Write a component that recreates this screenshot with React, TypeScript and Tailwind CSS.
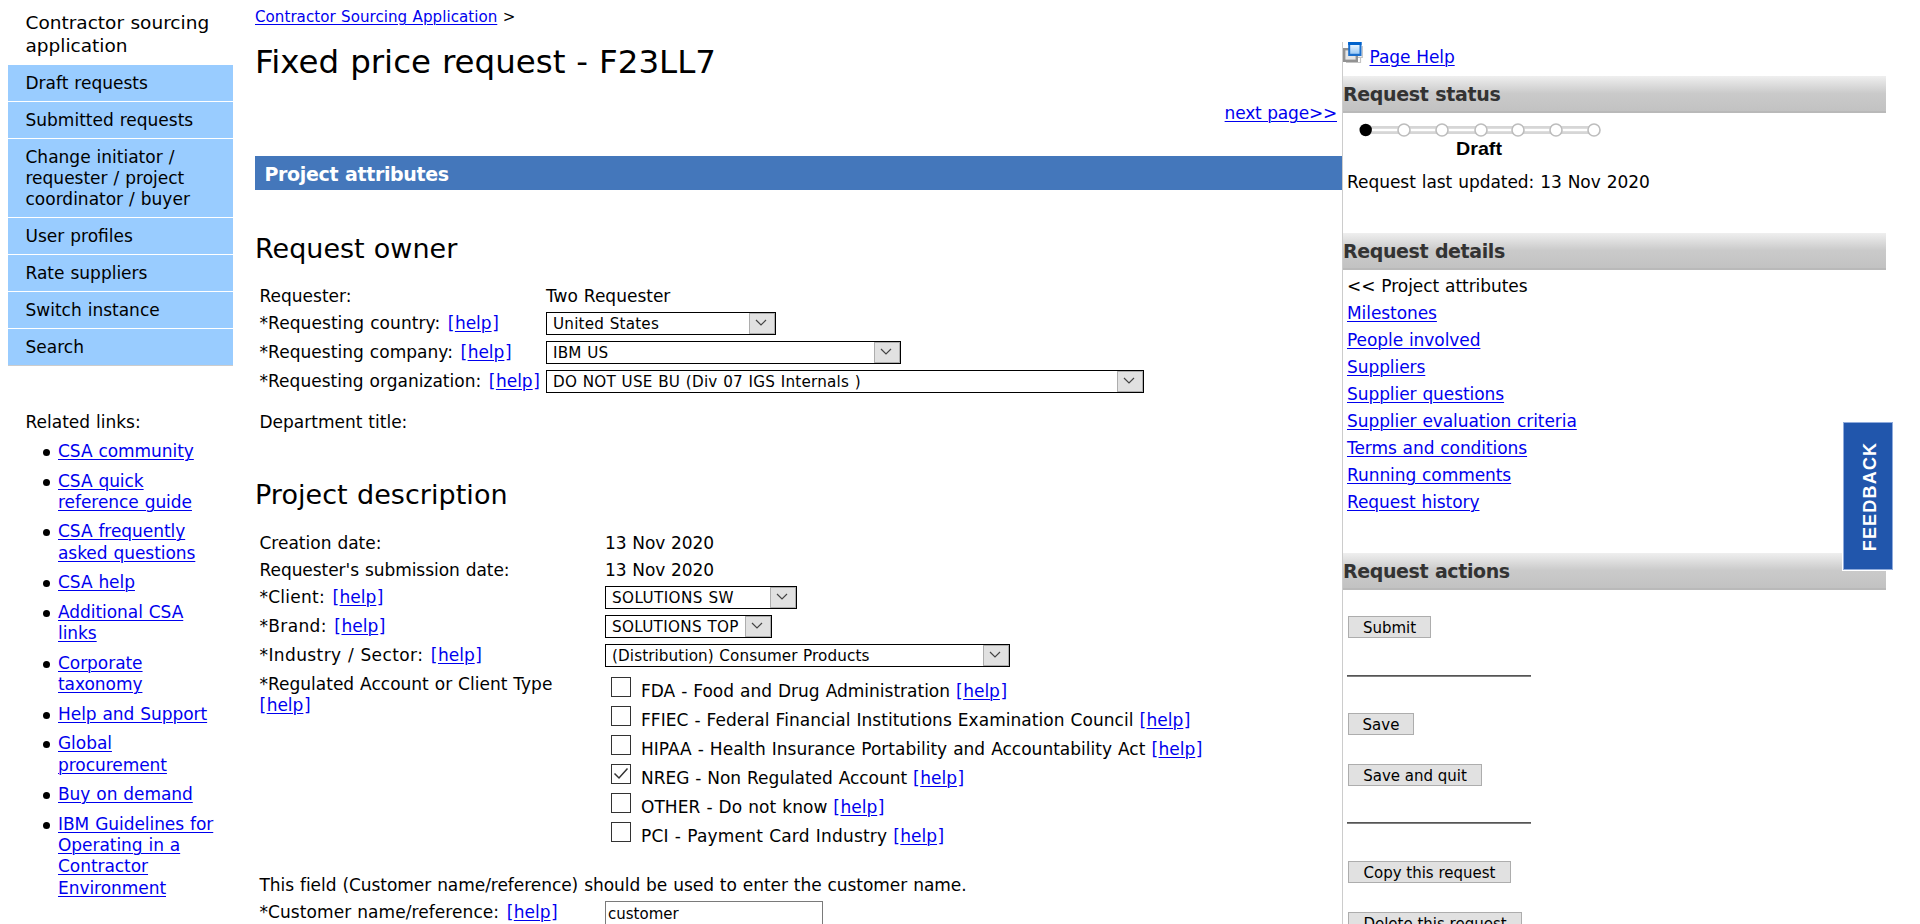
import type { ReactNode } from "react";

const navItems = [
  "Draft requests",
  "Submitted requests",
  "Change initiator / requester / project coordinator / buyer",
  "User profiles",
  "Rate suppliers",
  "Switch instance",
  "Search",
];

const relatedLinks = [
  "CSA community",
  "CSA quick reference guide",
  "CSA frequently asked questions",
  "CSA help",
  "Additional CSA links",
  "Corporate taxonomy",
  "Help and Support",
  "Global procurement",
  "Buy on demand",
  "IBM Guidelines for Operating in a Contractor Environment",
];

const accountTypes = [
  { label: "FDA - Food and Drug Administration", checked: false, spacing: "" },
  { label: "FFIEC - Federal Financial Institutions Examination Council", checked: false, spacing: "tracking-[0.04px]" },
  { label: "HIPAA - Health Insurance Portability and Accountability Act", checked: false, spacing: "tracking-[0.01px]" },
  { label: "NREG - Non Regulated Account", checked: true, spacing: "tracking-[-0.04px]" },
  { label: "OTHER - Do not know", checked: false, spacing: "tracking-[0.05px]" },
  { label: "PCI - Payment Card Industry", checked: false, spacing: "tracking-[0.18px]" },
];

const detailLinks = [
  "Milestones",
  "People involved",
  "Suppliers",
  "Supplier questions",
  "Supplier evaluation criteria",
  "Terms and conditions",
  "Running comments",
  "Request history",
];

function Link({ children }: { children: ReactNode }) {
  return (
    <a href="#" className="text-[#0000ee] underline decoration-1 underline-offset-2">
      {children}
    </a>
  );
}

function Help() {
  return (
    <a href="#" className="text-[#0000ee]">
      [<span className="mx-[0.5px] underline decoration-1 underline-offset-2">help</span>]
    </a>
  );
}

function FieldLabel({ children, spacing = "tracking-[0.07px]" }: { children: ReactNode; spacing?: string }) {
  return (
    <span className="h-[29px] pt-px whitespace-nowrap">
      <span className={`mr-[1.5px] ${spacing}`}>*{children}:</span> <Help />
    </span>
  );
}

function Select({ value, width, spacing = "tracking-[0.1px]" }: { value: string; width: string; spacing?: string }) {
  return (
    <div className={`flex h-[23px] border border-black bg-white ${width}`}>
      <span className={`flex-1 overflow-hidden pt-px pl-1.5 text-[15.2px] leading-[21px] whitespace-nowrap ${spacing}`}>{value}</span>
      <span className="flex w-[26px] shrink-0 items-center justify-center border border-[#adadad] bg-[#e1e1e1] pr-0.5 pb-px">
        <svg width="12" height="8" viewBox="0 0 12 8" fill="none" stroke="#444" strokeWidth="1.2">
          <path d="M1 1l5 5 5-5" />
        </svg>
      </span>
    </div>
  );
}

function Checkbox({ checked }: { checked: boolean }) {
  return (
    <span className="flex size-5 shrink-0 items-center justify-center border border-[#333] bg-white">
      {checked && (
        <svg width="16" height="14" viewBox="0 0 16 14" fill="none" stroke="#333" strokeWidth="1.5">
          <path d="M1.5 6.5l4.5 4.5L14.5 1.5" />
        </svg>
      )}
    </span>
  );
}

function PanelHeader({ children, spacing = "tracking-[-0.35px]" }: { children: ReactNode; spacing?: string }) {
  return (
    <h3 className={`h-[37px] border-b-2 border-[#b9b9b9] bg-linear-to-b from-[#efefef] via-[#cacaca] to-[#c2c2c2] text-[19px] leading-[36px] font-bold text-[#333] ${spacing}`}>
      {children}
    </h3>
  );
}

function ActionButton({ children, width }: { children: ReactNode; width: string }) {
  return (
    <button className={`ml-[5px] block h-[22px] border border-[#adadad] bg-[#e1e1e1] pt-px text-center text-[15px] leading-[20px] [word-spacing:0] whitespace-nowrap ${width}`}>
      {children}
    </button>
  );
}

function Rule() {
  return <div className="ml-1 h-[2px] w-[184px] border-t border-[#555] bg-[#808080]" />;
}

function StatusTrack() {
  return (
    <svg width="280" height="46" viewBox="0 0 280 46" className="block">
      <rect x="23" y="13" width="228" height="8" fill="#d6d6d6" />
      <rect x="23" y="15.8" width="228" height="2.4" fill="#fff" />
      {[61, 99, 138, 175, 213, 251].map((x) => (
        <circle key={x} cx={x} cy="17" r="6" fill="#fff" stroke="#bdbdbd" strokeWidth="1.6" />
      ))}
      <circle cx="22.7" cy="17" r="6.2" fill="#000" />
      <text x="113" y="42" fontFamily="Liberation Sans, sans-serif" fontWeight="700" fontSize="19" textLength="46" lengthAdjust="spacingAndGlyphs">
        Draft
      </text>
    </svg>
  );
}

function PageHelpIcon() {
  return (
    <svg width="20" height="21" viewBox="0 0 20 21" className="shrink-0">
      <defs>
        <linearGradient id="pane" x1="0" y1="0" x2="0" y2="1">
          <stop offset="0" stopColor="#e6f3ff" />
          <stop offset="1" stopColor="#9ccaf5" />
        </linearGradient>
      </defs>
      <path d="M3 20.5h14.5V15M19.3 4v11.3H8" fill="none" stroke="#c4c4c4" strokeWidth="1.2" />
      <rect x="1.2" y="7.2" width="12.6" height="11.6" fill="#e6e6e6" stroke="#929292" strokeWidth="2.4" />
      <rect x="5.2" y="0" width="13.3" height="14" fill="#1b6fcd" />
      <rect x="5.2" y="0" width="13.3" height="3" fill="#0062cc" />
      <rect x="7.2" y="3" width="9.3" height="8.8" fill="url(#pane)" />
    </svg>
  );
}

export default function App() {
  return (
    <div className="relative flex h-[924px] w-[1920px] items-start overflow-hidden bg-white font-['DejaVu_Sans',sans-serif] text-[17px] leading-[21px] text-black [word-spacing:0.034em]">
      <aside className="ml-2 w-[225px] shrink-0 pt-[11px]">
        <p className="pl-[17.5px] text-[18.5px] leading-[23px]">Contractor sourcing application</p>
        <ul className="mt-2 flex flex-col gap-px border-b border-[#ccc]">
          {navItems.map((item) => (
            <li key={item} className="bg-[#99ccff] pt-2 pr-6 pb-[7px] pl-[17.5px]">
              {item}
            </li>
          ))}
        </ul>
        <p className="mt-[46px] pl-[17.5px]">Related links:</p>
        <ul className="mt-2 flex flex-col gap-[8.3px] leading-[21.3px] tracking-[-0.05px]">
          {relatedLinks.map((item) => (
            <li key={item} className="flex items-start pl-[35px]">
              <span className="mt-[8px] mr-[8px] size-[7px] shrink-0 rounded-full bg-black" />
              <span className="w-[165px]">
                <Link>{item}</Link>
              </span>
            </li>
          ))}
        </ul>
      </aside>

      <main className="ml-[22px] w-[1087px] shrink-0 pt-[7px]">
        <p className="text-[15.1px] leading-[20px] tracking-[0.03px]">
          <Link>Contractor Sourcing Application</Link> &gt;
        </p>
        <h1 className="mt-[15px] text-[32.5px] leading-[40px]">Fixed price request - F23LL7</h1>
        <p className="mt-[21px] pr-[5px] text-right tracking-[-0.2px]">
          <Link>next page&gt;&gt;</Link>
        </p>
        <h2 className="mt-[32px] h-[34px] bg-[#4477bb] pt-px pl-[9.5px] text-[19px] leading-[34px] font-bold tracking-[-0.35px] text-white">Project attributes</h2>

        <h2 className="mt-[42px] text-[27px] leading-[34px]">Request owner</h2>
        <div className="mt-[20px] grid grid-cols-[286.5px_1fr] pl-[4.5px]">
          <span className="h-[26px]">Requester:</span>
          <span>Two Requester</span>
          <FieldLabel>Requesting country</FieldLabel>
          <Select value="United States" width="w-[230px]" spacing="tracking-[0.2px]" />
          <FieldLabel spacing="tracking-[0.04px]">Requesting company</FieldLabel>
          <Select value="IBM US" width="w-[355px]" spacing="tracking-[0.2px]" />
          <FieldLabel spacing="tracking-[0.02px]">Requesting organization</FieldLabel>
          <Select value="DO NOT USE BU (Div 07 IGS Internals )" width="w-[598px]" spacing="tracking-[0.22px]" />
          <span className="mt-[13px]">Department title:</span>
        </div>

        <h2 className="mt-[45px] text-[27px] leading-[34px] tracking-[0.05px]">Project description</h2>
        <div className="mt-[21px] grid grid-cols-[345.5px_1fr] pl-[4.5px]">
          <span className="h-[27px]">Creation date:</span>
          <span className="tracking-[-0.1px]">13 Nov 2020</span>
          <span className="h-[26px] tracking-[-0.05px]">Requester's submission date:</span>
          <span className="tracking-[-0.1px]">13 Nov 2020</span>
          <FieldLabel spacing="tracking-[0.25px]">Client</FieldLabel>
          <Select value="SOLUTIONS SW" width="w-[192px]" spacing="tracking-[0.4px]" />
          <FieldLabel spacing="tracking-[0.35px]">Brand</FieldLabel>
          <Select value="SOLUTIONS TOP" width="w-[167px]" spacing="tracking-[0.3px]" />
          <FieldLabel spacing="tracking-[0.4px]">Industry / Sector</FieldLabel>
          <Select value="(Distribution) Consumer Products" width="w-[405px]" />
          <span className="pt-px">*Regulated Account or Client Type<br /><Help /></span>
          <div className="flex flex-col gap-[2px] pt-1 pl-1.5">
            {accountTypes.map(({ label, checked, spacing }) => (
              <div key={label} className="flex h-[27px] items-start">
                <Checkbox checked={checked} />
                <span className="pt-1 pl-[10px]"><span className={spacing}>{label}</span> <Help /></span>
              </div>
            ))}
          </div>
        </div>
        <p className="mt-[26px] pl-[4.5px] tracking-[-0.045px]">This field (Customer name/reference) should be used to enter the customer name.</p>
        <div className="mt-[5px] grid grid-cols-[345.5px_1fr] pl-[4.5px]">
          <FieldLabel>Customer name/reference</FieldLabel>
          <span className="h-[24px] w-[218px] border border-[#7a7a7a] pt-[2px] pl-0.5 text-[15px]">customer</span>
        </div>
      </main>

      <section className="mt-[42px] h-[882px] w-[544px] shrink-0 border-l border-[#ccc]">
        <div className="flex h-[34px] items-start">
          <PageHelpIcon />
          <span className="pt-[5px] pl-[6.5px] tracking-[-0.08px]"><Link>Page Help</Link></span>
        </div>
        <PanelHeader>Request status</PanelHeader>
        <StatusTrack />
        <p className="mt-[13px] pl-1 tracking-[-0.04px]">Request last updated: 13 Nov 2020</p>
        <div className="mt-[40px]">
          <PanelHeader spacing="tracking-[-0.4px]">Request details</PanelHeader>
        </div>
        <ul className="mt-[6px] flex flex-col gap-[6px] pl-1">
          <li className="tracking-[-0.05px]">&lt;&lt; Project attributes</li>
          {detailLinks.map((item) => (
            <li key={item} className="tracking-[-0.07px]"><Link>{item}</Link></li>
          ))}
        </ul>
        <div className="mt-[40px]">
          <PanelHeader spacing="tracking-[-0.4px]">Request actions</PanelHeader>
        </div>
        <div className="mt-[26px] flex flex-col">
          <ActionButton width="w-[83px]">Submit</ActionButton>
          <div className="mt-[37px] mb-[36px]"><Rule /></div>
          <ActionButton width="w-[66px]">Save</ActionButton>
          <div className="h-[29px]" />
          <ActionButton width="w-[134px]">Save and quit</ActionButton>
          <div className="mt-[36px] mb-[37px]"><Rule /></div>
          <ActionButton width="w-[163px]">Copy this request</ActionButton>
          <div className="h-[29px]" />
          <ActionButton width="w-[174px]">Delete this request</ActionButton>
        </div>
      </section>

      <div className="absolute top-[421px] left-[1842px] border border-r-0 border-white">
        <div className="flex h-[148px] w-[50px] items-center justify-center border border-[#8fabdc] bg-[#2156ac] pl-[5px] font-['Liberation_Sans',sans-serif] text-[18px] font-bold text-white">
          <span className="-rotate-90 tracking-[1.2px] whitespace-nowrap">FEEDBACK</span>
        </div>
      </div>
    </div>
  );
}
